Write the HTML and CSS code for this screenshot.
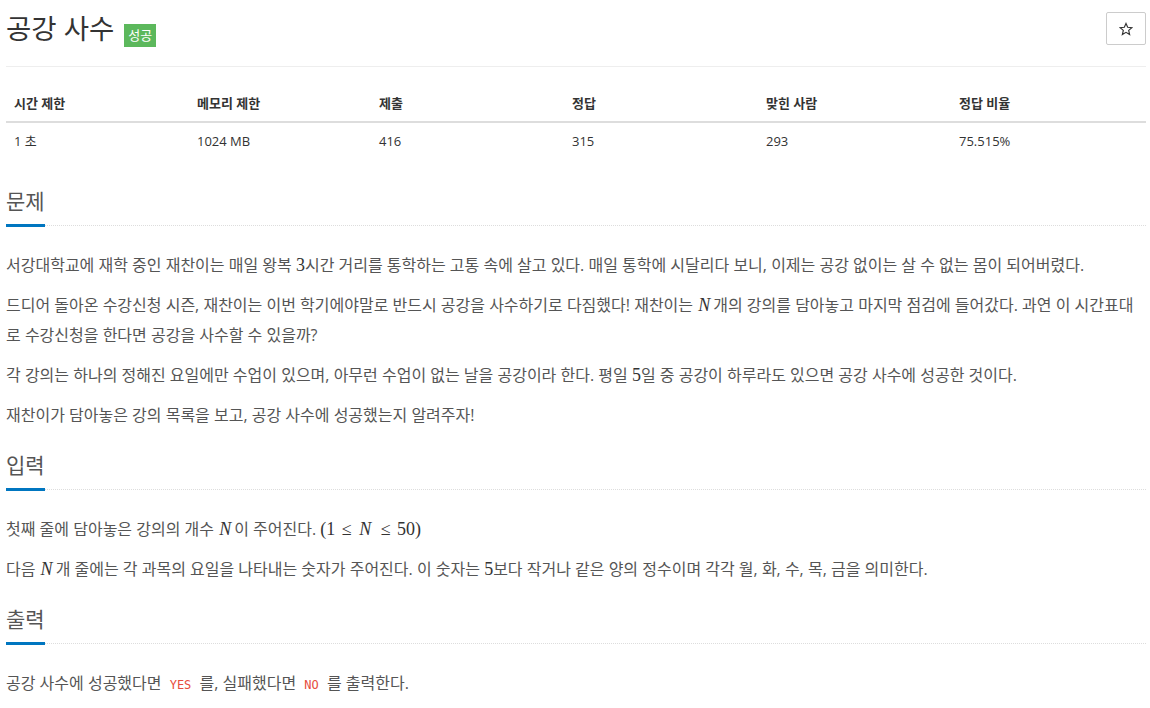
FILE: index.html
```html
<!DOCTYPE html>
<html lang="ko">
<head>
<meta charset="utf-8">
<title>공강 사수</title>
<link rel="stylesheet" href="styles.css">
</head>
<body>
<div class="page">
  <div class="page-header">
    <h1 class="title"><span class="title-text">공강 사수</span><span class="label">성공</span></h1>
    <button class="star-btn" type="button" aria-label="즐겨찾기">
      <svg width="14" height="14" viewBox="0 0 24 24"><path d="M12 2.5l2.9 6.6 7.1.6-5.4 4.7 1.6 7-6.2-3.7-6.2 3.7 1.6-7L2 9.7l7.1-.6z" fill="none" stroke="#333" stroke-width="2" stroke-linejoin="miter"/></svg>
    </button>
  </div>

  <table class="stats">
    <colgroup>
      <col class="c1"><col class="c2"><col class="c3"><col class="c4"><col class="c5"><col class="c6">
    </colgroup>
    <thead>
      <tr><th>시간 제한</th><th>메모리 제한</th><th>제출</th><th>정답</th><th>맞힌 사람</th><th>정답 비율</th></tr>
    </thead>
    <tbody>
      <tr><td>1 초</td><td>1024 MB</td><td>416</td><td>315</td><td>293</td><td>75.515%</td></tr>
    </tbody>
  </table>

  <section class="section first">
    <div class="headline"><h2>문제</h2></div>
    <div class="problem-text">
      <p>서강대학교에 재학 중인 재찬이는 매일 왕복 <span class="math">3</span>시간 거리를 통학하는 고통 속에 살고 있다. 매일 통학에 시달리다 보니, 이제는 공강 없이는 살 수 없는 몸이 되어버렸다.</p>
      <p>드디어 돌아온 수강신청 시즌, 재찬이는 이번 학기에야말로 반드시 공강을 사수하기로 다짐했다! 재찬이는 <span class="math"><i>N</i></span>개의 강의를 담아놓고 마지막 점검에 들어갔다. 과연 이 시간표대로 수강신청을 한다면 공강을 사수할 수 있을까?</p>
      <p>각 강의는 하나의 정해진 요일에만 수업이 있으며, 아무런 수업이 없는 날을 공강이라 한다. 평일 <span class="math">5</span>일 중 공강이 하루라도 있으면 공강 사수에 성공한 것이다.</p>
      <p>재찬이가 담아놓은 강의 목록을 보고, 공강 사수에 성공했는지 알려주자!</p>
    </div>
  </section>

  <section class="section">
    <div class="headline"><h2>입력</h2></div>
    <div class="problem-text">
      <p>첫째 줄에 담아놓은 강의의 개수 <span class="math"><i>N</i></span>이 주어진다. <span class="math">(1 <span class="rel">≤</span> <i>N</i> <span class="rel">≤</span> 50)</span></p>
      <p>다음 <span class="math"><i>N</i></span>개 줄에는 각 과목의 요일을 나타내는 숫자가 주어진다. 이 숫자는 <span class="math">5</span>보다 작거나 같은 양의 정수이며 각각 월, 화, 수, 목, 금을 의미한다.</p>
    </div>
  </section>

  <section class="section">
    <div class="headline"><h2>출력</h2></div>
    <div class="problem-text">
      <p>공강 사수에 성공했다면 <code>YES</code> 를, 실패했다면 <code>NO</code> 를 출력한다.</p>
    </div>
  </section>
</div>
</body>
</html>
```
FILE: styles.css
```css
* { box-sizing: border-box; }

html, body {
  margin: 0;
  padding: 0;
  background: #fff;
}

body {
  font-family: "Open Sans", "Noto Sans CJK KR", sans-serif;
  color: #333;
  font-size: 14px;
}

.page {
  width: 1140px;
  margin: 0 6px;
}

.page-header {
  display: flex;
  justify-content: space-between;
  align-items: flex-start;
  height: 67px;
  padding-top: 11px;
  border-bottom: 1px solid #eee;
}

.title {
  display: flex;
  align-items: flex-start;
  gap: 10px;
  margin: 0;
  font-size: 27.5px;
  font-weight: 400;
  line-height: 36px;
  color: #333;
}

.label {
  margin-top: 13px;
  display: inline-block;
  height: 23px;
  padding: 0 4px;
  background: #5cb85c;
  color: #fff;
  font-size: 13px;
  line-height: 23px;
  font-weight: 400;
}

.star-btn {
  margin-top: 1px;
  width: 40px;
  height: 33px;
  background: #fff;
  border: 1px solid #ccc;
  border-radius: 2px;
  padding: 0;
  display: flex;
  align-items: center;
  justify-content: center;
}

.stats {
  width: 1140px;
  margin-top: 18px;
  border-collapse: collapse;
  table-layout: fixed;
  font-size: 13px;
}

.stats .c1 { width: 183px; }
.stats .c2 { width: 182px; }
.stats .c3 { width: 193px; }
.stats .c4 { width: 194px; }
.stats .c5 { width: 193px; }
.stats .c6 { width: 195px; }

.stats th,
.stats td {
  text-align: left;
  padding: 8px;
  line-height: 20px;
  color: #333;
}

.stats th {
  font-weight: 700;
  border-bottom: 2px solid #ddd;
}

.section {
  margin-top: 23px;
}

.section.first {
  margin-top: 30px;
}

.headline {
  border-bottom: 1px dotted #ddd;
  margin-bottom: 24px;
}

.headline h2 {
  display: inline-block;
  margin: 0 0 -2px 0;
  font-size: 21px;
  font-weight: 400;
  line-height: 24px;
  padding-bottom: 11px;
  border-bottom: 3px solid #0076c0;
  color: #555;
}

.problem-text p {
  margin: 0 0 10px;
  font-size: 16px;
  line-height: 30px;
  color: #555;
  word-break: break-all;
}

.math {
  font-family: "Liberation Serif", "DejaVu Serif", serif;
  font-size: 18px;
  color: #333;
}

.math i {
  font-style: italic;
  padding: 0 3px 0 1px;
}

.math .rel {
  padding: 0 2px;
}

code {
  font-family: "DejaVu Sans Mono", "Liberation Mono", monospace;
  font-size: 12px;
  color: #e74c3c;
  padding: 2px 4px;
}
```
